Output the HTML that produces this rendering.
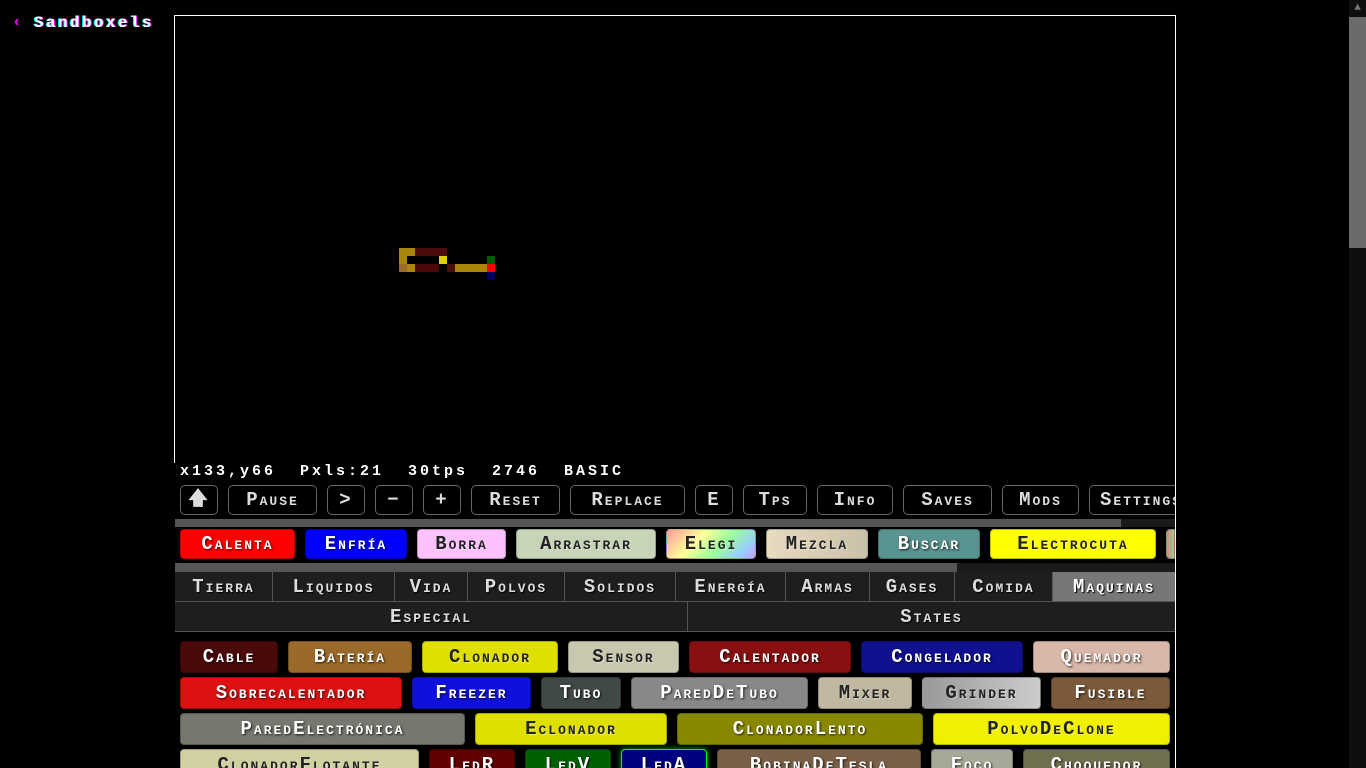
<!DOCTYPE html>
<html><head><meta charset="utf-8"><style>
html,body{margin:0;padding:0;background:#000;width:1366px;height:768px;overflow:hidden;}
body{position:relative;font-family:"Liberation Mono","DejaVu Sans Mono",monospace;font-weight:bold;}
.a{position:absolute;box-sizing:border-box;}
.b{position:absolute;box-sizing:border-box;border-radius:4px;border:1px solid rgba(0,0,0,.25);display:flex;align-items:center;justify-content:center;font-size:19px;font-variant:small-caps;color:#fff;text-shadow:1px 1px 2px rgba(0,0,0,.8);white-space:nowrap;overflow:hidden;letter-spacing:2px}
.d{color:#222;text-shadow:1px 1px 1px rgba(255,255,255,.4)}
.c{position:absolute;box-sizing:border-box;top:485px;height:30px;border:1px solid #666;border-radius:5px;display:flex;align-items:center;justify-content:center;color:#ddd;font-size:19px;font-variant:small-caps;white-space:nowrap;overflow:hidden;letter-spacing:2px}
.t{position:absolute;top:572px;height:30px;box-sizing:border-box;border-right:1px solid #555;display:flex;align-items:center;justify-content:center;color:#ddd;font-size:19px;font-variant:small-caps;text-shadow:1px 1px 1px #000;letter-spacing:2px;white-space:nowrap}
.p{position:absolute;}
</style></head><body>
<div class="a" style="left:12px;top:13px;color:#f0f;font-size:16px">&lsaquo;</div>
<div class="a" style="left:34px;top:14px;color:#fff;font-size:16px;letter-spacing:2.4px;text-shadow:1px 0 #f0f,-1px 0 #0ff">Sandboxels</div>
<!-- canvas -->
<div class="a" style="left:174px;top:15px;width:1002px;height:448px;border:1px solid #fff;border-bottom:none"></div>
<div class="a" style="left:1175px;top:15px;width:1px;height:753px;background:#fff"></div>
<!-- pixels -->
<div class="p" style="left:399px;top:248px;width:16px;height:8px;background:#a8860a"></div>
<div class="p" style="left:415px;top:248px;width:32px;height:8px;background:#4a0c0c"></div>
<div class="p" style="left:399px;top:256px;width:8px;height:8px;background:#a8860a"></div>
<div class="p" style="left:439px;top:256px;width:8px;height:8px;background:#e0d000"></div>
<div class="p" style="left:399px;top:264px;width:8px;height:8px;background:#9a6a28"></div>
<div class="p" style="left:407px;top:264px;width:8px;height:8px;background:#a8860a"></div>
<div class="p" style="left:415px;top:264px;width:24px;height:8px;background:#4a0808"></div>
<div class="p" style="left:447px;top:264px;width:8px;height:8px;background:#4a0c0c"></div>
<div class="p" style="left:455px;top:264px;width:32px;height:8px;background:#a8860a"></div>
<div class="p" style="left:487px;top:256px;width:8px;height:8px;background:#006000"></div>
<div class="p" style="left:487px;top:264px;width:8px;height:8px;background:#f00"></div>
<div class="p" style="left:487px;top:272px;width:8px;height:8px;background:#000060"></div>
<!-- stats -->
<div class="a" style="left:180px;top:463px;color:#fff;font-size:15px;letter-spacing:3px;white-space:pre">x133,y66  Pxls:21  30tps  2746  BASIC</div>
<!-- controls -->
<div class="a" style="left:175px;top:480px;width:1000px;height:40px;overflow:hidden">
<div class="c" style="left:5px;width:38px;top:5px">&#129093;</div>
<div class="c" style="left:53px;width:89px;top:5px">Pause</div>
<div class="c" style="left:152px;width:38px;top:5px">&gt;</div>
<div class="c" style="left:200px;width:38px;top:5px">&minus;</div>
<div class="c" style="left:248px;width:38px;top:5px">+</div>
<div class="c" style="left:296px;width:89px;top:5px">Reset</div>
<div class="c" style="left:395px;width:115px;top:5px">Replace</div>
<div class="c" style="left:520px;width:38px;top:5px">E</div>
<div class="c" style="left:568px;width:64px;top:5px">Tps</div>
<div class="c" style="left:642px;width:76px;top:5px">Info</div>
<div class="c" style="left:728px;width:89px;top:5px">Saves</div>
<div class="c" style="left:827px;width:77px;top:5px">Mods</div>
<div class="c" style="left:914px;width:120px;top:5px;justify-content:flex-start;padding-left:10px">Settings</div>
</div>
<div class="a" style="left:175px;top:519px;width:946px;height:8px;background:#555"></div>
<div class="a" style="left:1121px;top:519px;width:54px;height:8px;background:#1a1a1a"></div>
<!-- tools -->
<div class="b" style="left:180px;top:529px;width:115px;height:30px;background:#f00">Calenta</div>
<div class="b" style="left:305px;top:529px;width:102px;height:30px;background:#00f">Enfría</div>
<div class="b d" style="left:417px;top:529px;width:89px;height:30px;background:#ffc0ff">Borra</div>
<div class="b d" style="left:516px;top:529px;width:140px;height:30px;background:#c8d4b8">Arrastrar</div>
<div class="b d" style="left:666px;top:529px;width:90px;height:30px;background:linear-gradient(135deg,#f99,#ff9 35%,#9f9 60%,#9cf 85%,#c9f)">Elegi</div>
<div class="b d" style="left:766px;top:529px;width:102px;height:30px;background:linear-gradient(90deg,#e8dcc0,#c8c0a8)">Mezcla</div>
<div class="b" style="left:878px;top:529px;width:102px;height:30px;background:#5a9490">Buscar</div>
<div class="b d" style="left:990px;top:529px;width:166px;height:30px;background:#ff0">Electrocuta</div>
<div class="b" style="left:1166px;top:529px;width:9px;height:30px;background:linear-gradient(90deg,#d88,#9c8);border-radius:4px 0 0 4px"></div>
<div class="a" style="left:175px;top:563px;width:782px;height:9px;background:#555"></div>
<div class="a" style="left:957px;top:563px;width:218px;height:9px;background:#1a1a1a"></div>
<!-- categories -->
<div class="a" style="left:175px;top:572px;width:1000px;height:196px;background:#000"></div>
<div class="a" style="left:175px;top:572px;width:1000px;height:59px;background:#1e1e1e"></div>
<div class="t" style="left:175px;width:98px">Tierra</div>
<div class="t" style="left:273px;width:122px">Liquidos</div>
<div class="t" style="left:395px;width:73px">Vida</div>
<div class="t" style="left:468px;width:97px">Polvos</div>
<div class="t" style="left:565px;width:111px">Solidos</div>
<div class="t" style="left:676px;width:110px">Energía</div>
<div class="t" style="left:786px;width:84px">Armas</div>
<div class="t" style="left:870px;width:85px">Gases</div>
<div class="t" style="left:955px;width:98px">Comida</div>
<div class="t" style="left:1053px;width:122px;background:#777;color:#fff;border:none">Maquinas</div>
<div class="a" style="left:175px;top:601px;width:1000px;height:1px;background:#555"></div>
<div class="t" style="left:175px;top:602px;width:513px;height:29px">Especial</div>
<div class="t" style="left:688px;top:602px;width:487px;height:29px;border:none">States</div>
<div class="a" style="left:175px;top:631px;width:1000px;height:1px;background:#555"></div>
<!-- elements -->
<div class="b" style="left:180px;top:641px;width:98px;height:32px;background:#4a0a0a">Cable</div>
<div class="b" style="left:288px;top:641px;width:124px;height:32px;background:#9a6a2a">Batería</div>
<div class="b d" style="left:422px;top:641px;width:136px;height:32px;background:#e0e000">Clonador</div>
<div class="b d" style="left:568px;top:641px;width:111px;height:32px;background:#c8c8b0">Sensor</div>
<div class="b" style="left:689px;top:641px;width:162px;height:32px;background:#881010">Calentador</div>
<div class="b" style="left:861px;top:641px;width:162px;height:32px;background:#101090">Congelador</div>
<div class="b" style="left:1033px;top:641px;width:137px;height:32px;background:#d8b8a8">Quemador</div>

<div class="b" style="left:180px;top:677px;width:222px;height:32px;background:#dd1111">Sobrecalentador</div>
<div class="b" style="left:412px;top:677px;width:119px;height:32px;background:#1010dd">Freezer</div>
<div class="b" style="left:541px;top:677px;width:80px;height:32px;background:#404848">Tubo</div>
<div class="b" style="left:631px;top:677px;width:177px;height:32px;background:#888">ParedDeTubo</div>
<div class="b d" style="left:818px;top:677px;width:94px;height:32px;background:#c0b8a0">Mixer</div>
<div class="b d" style="left:922px;top:677px;width:119px;height:32px;background:linear-gradient(90deg,#999,#ccc)">Grinder</div>
<div class="b" style="left:1051px;top:677px;width:119px;height:32px;background:#7a5a3a">Fusible</div>

<div class="b" style="left:180px;top:713px;width:285px;height:32px;background:#777770">ParedElectrónica</div>
<div class="b d" style="left:475px;top:713px;width:192px;height:32px;background:#e0e000">Eclonador</div>
<div class="b" style="left:677px;top:713px;width:246px;height:32px;background:#888800">ClonadorLento</div>
<div class="b d" style="left:933px;top:713px;width:237px;height:32px;background:#f0f000">PolvoDeClone</div>

<div class="b d" style="left:180px;top:749px;width:239px;height:32px;background:#d0d0a0">ClonadorFlotante</div>
<div class="b" style="left:429px;top:749px;width:86px;height:32px;background:#600000">LedR</div>
<div class="b" style="left:525px;top:749px;width:86px;height:32px;background:#006000">LedV</div>
<div class="b" style="left:621px;top:749px;width:86px;height:32px;background:#000080;border:1px solid #0f0;box-shadow:0 0 6px #0a0">LedA</div>
<div class="b" style="left:717px;top:749px;width:204px;height:32px;background:#7a6048">BobinaDeTesla</div>
<div class="b" style="left:931px;top:749px;width:82px;height:32px;background:#a8a898">Foco</div>
<div class="b" style="left:1023px;top:749px;width:147px;height:32px;background:#707050">Choquedor</div>
<!-- page scrollbar -->
<div class="a" style="left:1349px;top:0;width:17px;height:768px;background:#0f0f0f"></div>
<div class="a" style="left:1349px;top:0;width:17px;height:17px;color:#777;font-size:11px;text-align:center;line-height:17px">&#9650;</div>
<div class="a" style="left:1349px;top:17px;width:17px;height:231px;background:#6b6b6b"></div>
</body></html>
